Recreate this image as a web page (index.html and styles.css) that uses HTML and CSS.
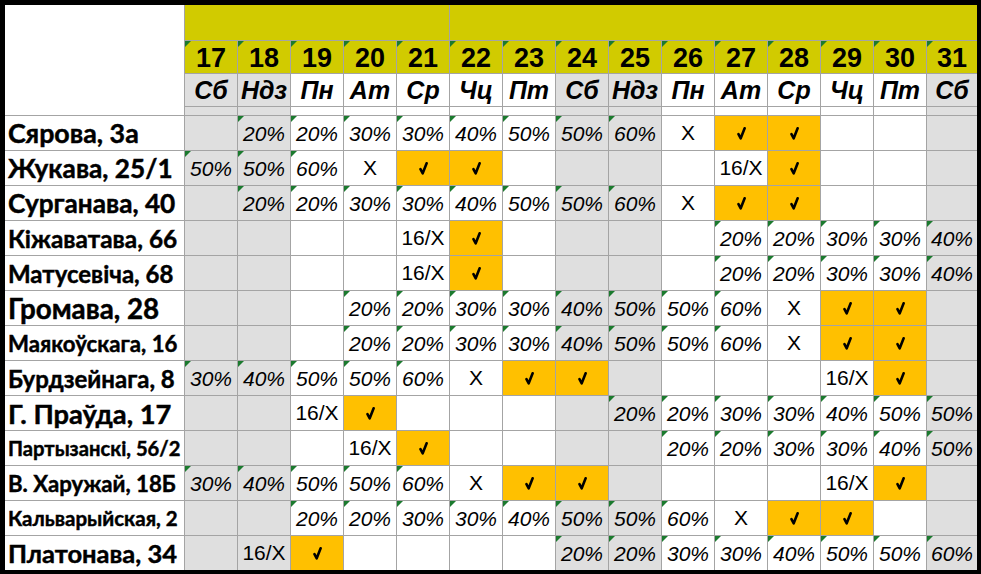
FILE: index.html
```html
<!DOCTYPE html>
<html lang="be">
<head>
<meta charset="utf-8">
<title>Графік</title>
<link rel="stylesheet" href="styles.css">
</head>
<body>
<div class="sheet">
  <div class="corner"></div>
  <div class="c y band1"></div>
  <div class="c y band2"></div>

  <div class="c y dn">17</div><div class="c y dn">18</div><div class="c y dn">19</div><div class="c y dn">20</div><div class="c y dn">21</div><div class="c y dn">22</div><div class="c y dn">23</div><div class="c y dn">24</div><div class="c y dn">25</div><div class="c y dn">26</div><div class="c y dn">27</div><div class="c y dn">28</div><div class="c y dn">29</div><div class="c y dn">30</div><div class="c y dn">31</div>

  <div class="c w wd">Сб</div><div class="c w wd">Ндз</div><div class="c wd">Пн</div><div class="c wd">Ат</div><div class="c wd">Ср</div><div class="c wd">Чц</div><div class="c wd">Пт</div><div class="c w wd">Сб</div><div class="c w wd">Ндз</div><div class="c wd">Пн</div><div class="c wd">Ат</div><div class="c wd">Ср</div><div class="c wd">Чц</div><div class="c wd">Пт</div><div class="c w wd">Сб</div>

  <div class="c w"></div><div class="c w"></div><div class="c"></div><div class="c"></div><div class="c"></div><div class="c"></div><div class="c"></div><div class="c w"></div><div class="c w"></div><div class="c"></div><div class="c"></div><div class="c"></div><div class="c"></div><div class="c"></div><div class="c w"></div>

  <!-- Сярова -->
  <div class="c nm f268">Сярова, 3а</div>
  <div class="c w"></div><div class="c w p">20%</div><div class="c p">20%</div><div class="c p">30%</div><div class="c p">30%</div><div class="c p">40%</div><div class="c p">50%</div><div class="c w p">50%</div><div class="c w p">60%</div><div class="c">X</div><div class="c g"><svg class="ck" viewBox="0 0 8 11"><path d="M1.3 6 L3.3 9.8 L6.8 0.9"/></svg></div><div class="c g"><svg class="ck" viewBox="0 0 8 11"><path d="M1.3 6 L3.3 9.8 L6.8 0.9"/></svg></div><div class="c"></div><div class="c"></div><div class="c w"></div>

  <!-- Жукава -->
  <div class="c nm f264">Жукава, 25/1</div>
  <div class="c w p">50%</div><div class="c w p">50%</div><div class="c p">60%</div><div class="c">X</div><div class="c g"><svg class="ck" viewBox="0 0 8 11"><path d="M1.3 6 L3.3 9.8 L6.8 0.9"/></svg></div><div class="c g"><svg class="ck" viewBox="0 0 8 11"><path d="M1.3 6 L3.3 9.8 L6.8 0.9"/></svg></div><div class="c"></div><div class="c w"></div><div class="c w"></div><div class="c"></div><div class="c">16/X</div><div class="c g"><svg class="ck" viewBox="0 0 8 11"><path d="M1.3 6 L3.3 9.8 L6.8 0.9"/></svg></div><div class="c"></div><div class="c"></div><div class="c w"></div>

  <!-- Сурганава -->
  <div class="c nm f262">Сурганава, 40</div>
  <div class="c w"></div><div class="c w p">20%</div><div class="c p">20%</div><div class="c p">30%</div><div class="c p">30%</div><div class="c p">40%</div><div class="c p">50%</div><div class="c w p">50%</div><div class="c w p">60%</div><div class="c">X</div><div class="c g"><svg class="ck" viewBox="0 0 8 11"><path d="M1.3 6 L3.3 9.8 L6.8 0.9"/></svg></div><div class="c g"><svg class="ck" viewBox="0 0 8 11"><path d="M1.3 6 L3.3 9.8 L6.8 0.9"/></svg></div><div class="c"></div><div class="c"></div><div class="c w"></div>

  <!-- Кіжаватава -->
  <div class="c nm f244">Кіжаватава, 66</div>
  <div class="c w"></div><div class="c w"></div><div class="c"></div><div class="c"></div><div class="c">16/X</div><div class="c g"><svg class="ck" viewBox="0 0 8 11"><path d="M1.3 6 L3.3 9.8 L6.8 0.9"/></svg></div><div class="c"></div><div class="c w"></div><div class="c w"></div><div class="c"></div><div class="c p">20%</div><div class="c p">20%</div><div class="c p">30%</div><div class="c p">30%</div><div class="c w p">40%</div>

  <!-- Матусевіча -->
  <div class="c nm f24">Матусевіча, 68</div>
  <div class="c w"></div><div class="c w"></div><div class="c"></div><div class="c"></div><div class="c">16/X</div><div class="c g"><svg class="ck" viewBox="0 0 8 11"><path d="M1.3 6 L3.3 9.8 L6.8 0.9"/></svg></div><div class="c"></div><div class="c w"></div><div class="c w"></div><div class="c"></div><div class="c p">20%</div><div class="c p">20%</div><div class="c p">30%</div><div class="c p">30%</div><div class="c w p">40%</div>

  <!-- Громава -->
  <div class="c nm f275">Громава, 28</div>
  <div class="c w"></div><div class="c w"></div><div class="c"></div><div class="c p">20%</div><div class="c p">20%</div><div class="c p">30%</div><div class="c p">30%</div><div class="c w p">40%</div><div class="c w p">50%</div><div class="c p">50%</div><div class="c p">60%</div><div class="c">X</div><div class="c g"><svg class="ck" viewBox="0 0 8 11"><path d="M1.3 6 L3.3 9.8 L6.8 0.9"/></svg></div><div class="c g"><svg class="ck" viewBox="0 0 8 11"><path d="M1.3 6 L3.3 9.8 L6.8 0.9"/></svg></div><div class="c w"></div>

  <!-- Маякоўскага -->
  <div class="c nm f22">Маякоўскага, 16</div>
  <div class="c w"></div><div class="c w"></div><div class="c"></div><div class="c p">20%</div><div class="c p">20%</div><div class="c p">30%</div><div class="c p">30%</div><div class="c w p">40%</div><div class="c w p">50%</div><div class="c p">50%</div><div class="c p">60%</div><div class="c">X</div><div class="c g"><svg class="ck" viewBox="0 0 8 11"><path d="M1.3 6 L3.3 9.8 L6.8 0.9"/></svg></div><div class="c g"><svg class="ck" viewBox="0 0 8 11"><path d="M1.3 6 L3.3 9.8 L6.8 0.9"/></svg></div><div class="c w"></div>

  <!-- Бурдзейнага -->
  <div class="c nm f24">Бурдзейнага, 8</div>
  <div class="c w p">30%</div><div class="c w p">40%</div><div class="c p">50%</div><div class="c p">50%</div><div class="c p">60%</div><div class="c">X</div><div class="c g"><svg class="ck" viewBox="0 0 8 11"><path d="M1.3 6 L3.3 9.8 L6.8 0.9"/></svg></div><div class="c g"><svg class="ck" viewBox="0 0 8 11"><path d="M1.3 6 L3.3 9.8 L6.8 0.9"/></svg></div><div class="c w"></div><div class="c"></div><div class="c"></div><div class="c"></div><div class="c">16/X</div><div class="c g"><svg class="ck" viewBox="0 0 8 11"><path d="M1.3 6 L3.3 9.8 L6.8 0.9"/></svg></div><div class="c w"></div>

  <!-- Г. Праўда -->
  <div class="c nm f273">Г. Праўда, 17</div>
  <div class="c w"></div><div class="c w"></div><div class="c">16/X</div><div class="c g"><svg class="ck" viewBox="0 0 8 11"><path d="M1.3 6 L3.3 9.8 L6.8 0.9"/></svg></div><div class="c"></div><div class="c"></div><div class="c"></div><div class="c w"></div><div class="c w p">20%</div><div class="c p">20%</div><div class="c p">30%</div><div class="c p">30%</div><div class="c p">40%</div><div class="c p">50%</div><div class="c w p">50%</div>

  <!-- Партызанскі -->
  <div class="c nm f202">Партызанскі, 56/2</div>
  <div class="c w"></div><div class="c w"></div><div class="c"></div><div class="c">16/X</div><div class="c g"><svg class="ck" viewBox="0 0 8 11"><path d="M1.3 6 L3.3 9.8 L6.8 0.9"/></svg></div><div class="c"></div><div class="c"></div><div class="c w"></div><div class="c w"></div><div class="c p">20%</div><div class="c p">20%</div><div class="c p">30%</div><div class="c p">30%</div><div class="c p">40%</div><div class="c w p">50%</div>

  <!-- В. Харужай -->
  <div class="c nm f22">В. Харужай, 18Б</div>
  <div class="c w p">30%</div><div class="c w p">40%</div><div class="c p">50%</div><div class="c p">50%</div><div class="c p">60%</div><div class="c">X</div><div class="c g"><svg class="ck" viewBox="0 0 8 11"><path d="M1.3 6 L3.3 9.8 L6.8 0.9"/></svg></div><div class="c g"><svg class="ck" viewBox="0 0 8 11"><path d="M1.3 6 L3.3 9.8 L6.8 0.9"/></svg></div><div class="c w"></div><div class="c"></div><div class="c"></div><div class="c"></div><div class="c">16/X</div><div class="c g"><svg class="ck" viewBox="0 0 8 11"><path d="M1.3 6 L3.3 9.8 L6.8 0.9"/></svg></div><div class="c w"></div>

  <!-- Кальварыйская -->
  <div class="c nm f205">Кальварыйская, 2</div>
  <div class="c w"></div><div class="c w"></div><div class="c p">20%</div><div class="c p">20%</div><div class="c p">30%</div><div class="c p">30%</div><div class="c p">40%</div><div class="c w p">50%</div><div class="c w p">50%</div><div class="c p">60%</div><div class="c">X</div><div class="c g"><svg class="ck" viewBox="0 0 8 11"><path d="M1.3 6 L3.3 9.8 L6.8 0.9"/></svg></div><div class="c g"><svg class="ck" viewBox="0 0 8 11"><path d="M1.3 6 L3.3 9.8 L6.8 0.9"/></svg></div><div class="c"></div><div class="c w"></div>

  <!-- Платонава -->
  <div class="c nm f255">Платонава, 34</div>
  <div class="c w"></div><div class="c w">16/X</div><div class="c g"><svg class="ck" viewBox="0 0 8 11"><path d="M1.3 6 L3.3 9.8 L6.8 0.9"/></svg></div><div class="c"></div><div class="c"></div><div class="c"></div><div class="c"></div><div class="c w p">20%</div><div class="c w p">20%</div><div class="c p">30%</div><div class="c p">30%</div><div class="c p">40%</div><div class="c p">50%</div><div class="c p">50%</div><div class="c w p">60%</div>
</div>
</body>
</html>
```

FILE: styles.css
```css
html, body {
  margin: 0;
  padding: 0;
  background: #000;
}

.sheet {
  box-sizing: border-box;
  width: 981px;
  height: 574px;
  display: grid;
  grid-template-columns: 179px repeat(14, 52px) 1fr;
  grid-template-rows: 35px 32px 32px 8px repeat(13, 34px);
  gap: 1px;
  background: #a4a4a4;
  border-style: solid;
  border-color: #000;
  border-width: 5px 4px 4px 5px;
}

.corner {
  grid-row: 1 / 5;
  grid-column: 1;
  background: #fff;
}

.band1 { grid-column: 2 / 7; }
.band2 { grid-column: 7 / 17; }

.c {
  position: relative;
  display: flex;
  align-items: center;
  justify-content: center;
  background: #fff;
  font-family: "Liberation Sans", Arial, sans-serif;
  font-size: 21px;
  color: #000;
  white-space: nowrap;
  overflow: hidden;
}

.w { background: #dfdfdf; }
.g { background: #ffc000; }
.y { background: #d1cb00; }

.dn {
  font-weight: 700;
  font-size: 27px;
  padding-top: 2px;
}

.wd {
  font-weight: 700;
  font-style: italic;
  font-size: 25px;
}

.p {
  font-style: italic;
  padding-top: 2px;
}

.p::before,
.dn::before {
  content: "";
  position: absolute;
  left: 0;
  top: 0;
  border-style: solid;
  border-width: 6px 6px 0 0;
  border-color: #1b7a2e transparent transparent transparent;
}

.nm {
  justify-content: flex-start;
  padding-left: 3px;
  font-family: Lato, "Noto Sans", sans-serif;
  font-weight: 700;
  -webkit-text-stroke: 0.45px #000;
}

.f202 { font-size: 20.2px; }
.f205 { font-size: 20.5px; }
.f22 { font-size: 22.2px; }
.f24 { font-size: 24px; }
.f244 { font-size: 24.4px; }
.f255 { font-size: 25.5px; }
.f262 { font-size: 26.2px; }
.f264 { font-size: 26.2px; }
.f268 { font-size: 26.8px; }
.f273 { font-size: 27.3px; }
.f275 { font-size: 27.8px; }

.ck {
  width: 9px;
  height: 13px;
  fill: none;
  stroke: #000;
  stroke-width: 2.3;
  stroke-linecap: round;
  stroke-linejoin: round;
}
```
